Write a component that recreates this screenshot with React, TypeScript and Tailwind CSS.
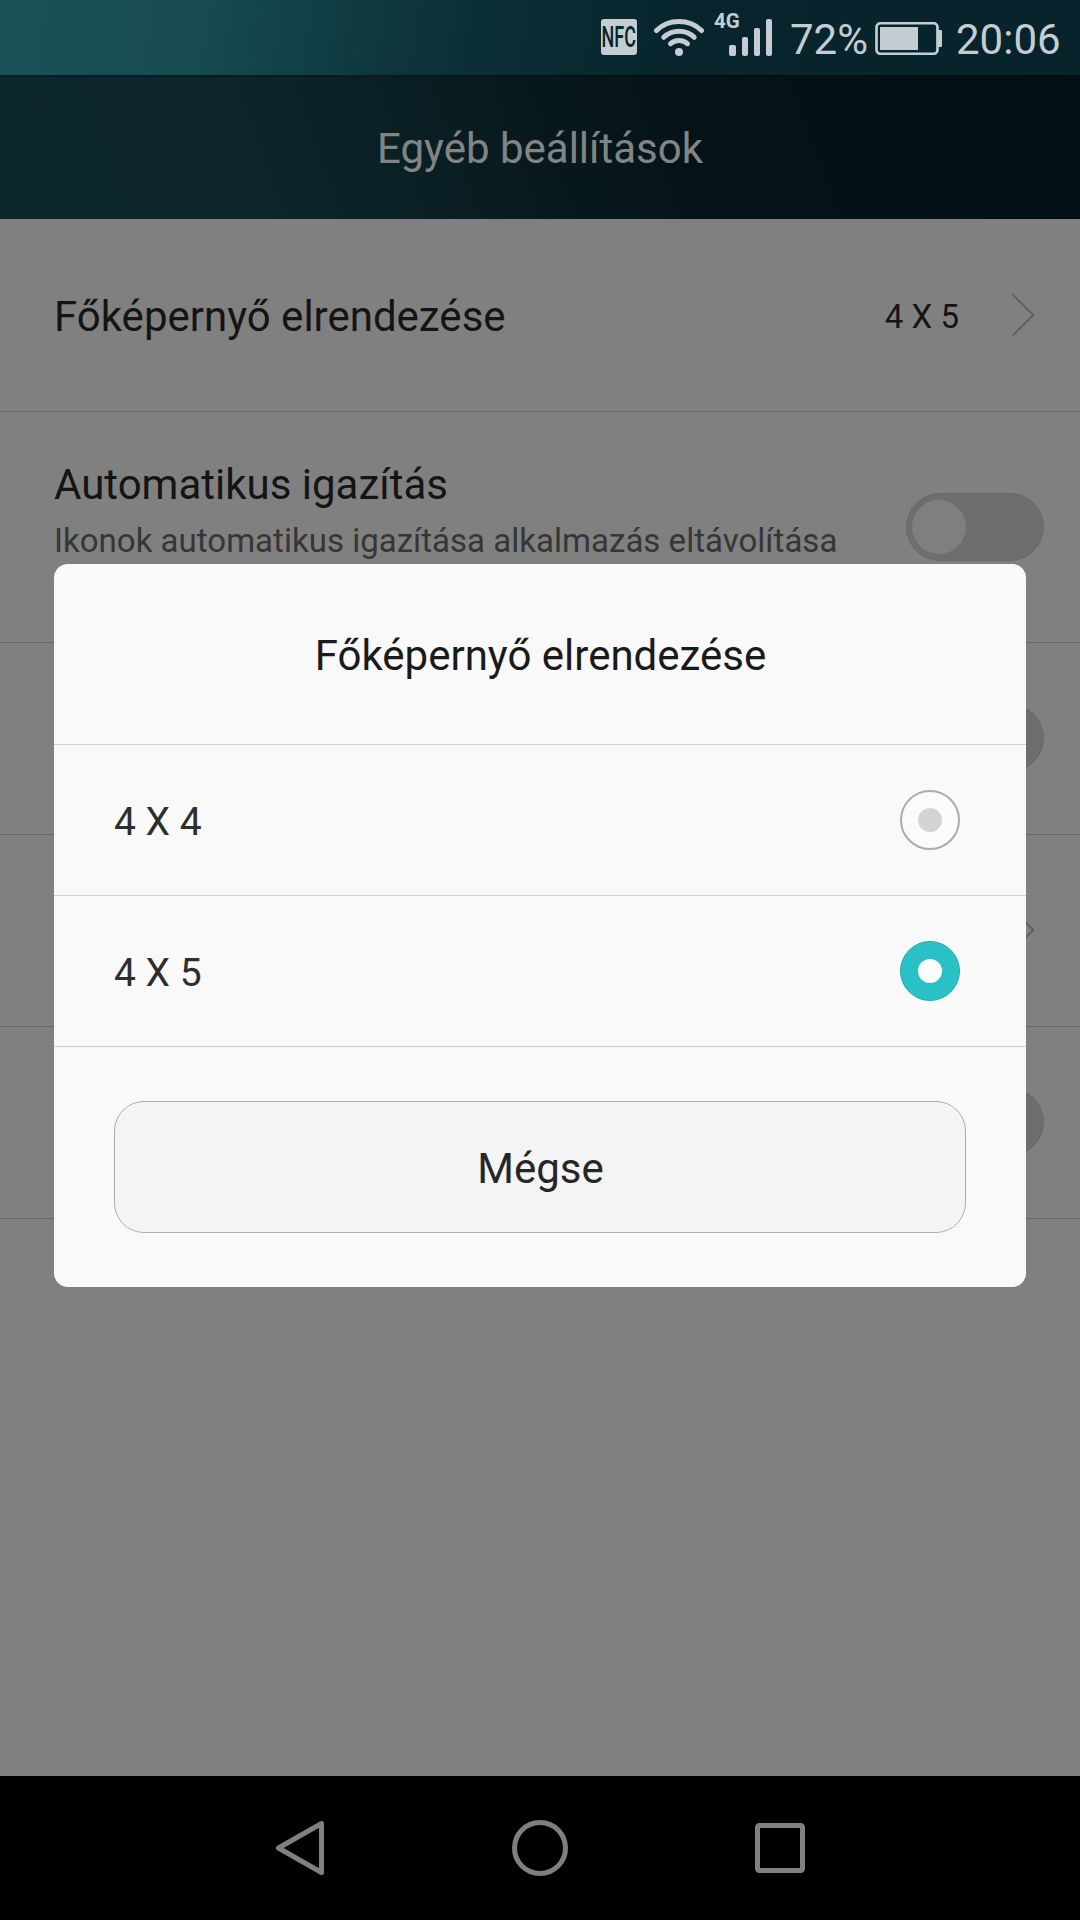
import React from "react";

function StatusBar() {
  return (
    <div className="flex h-[75px] shrink-0 items-start bg-[linear-gradient(100deg,#195259_0%,#184f55_10%,#164b50_19%,#113f45_29%,#0e373c_36%,#0b2d35_46%,#08252d_62%,#07232b_100%)] pl-[601px] text-[#c4cdd1]">
      <div className="mt-[19px] flex h-9 w-9 items-center justify-center rounded-[3px] bg-[#c4cdd1] text-[#08252d]">
        <span className="scale-x-[0.6] text-[30px] leading-none font-medium">NFC</span>
      </div>
      <svg className="mt-[18px] ml-[16px] h-[39px] w-[52px]" viewBox="0 0 52 39" fill="none" stroke="#c4cdd1" strokeWidth="5" strokeLinecap="round">
        <path d="M3.500 12.600C15.500 .6 36.500 .6 48.500 12.600" />
        <path d="M10.800 19.300C19 11.200 33 11.200 41.200 19.300" />
        <path d="M17.500 25.700C22 21.300 30 21.300 34.500 25.700" />
        <circle cx="26" cy="34" r="4" fill="#c4cdd1" stroke="none" />
      </svg>
      <div className="relative ml-[9px] h-[56px] w-[58px]">
        <span className="absolute top-[11px] left-0 origin-left scale-x-[0.98] text-[21px] leading-[20px] font-bold">4G</span>
        <svg className="absolute top-[19px] left-[14px] h-[37px] w-[45px]" viewBox="0 0 45 37" fill="#c4cdd1">
          <rect x="1" y="26" width="7" height="11" rx="2" />
          <rect x="14" y="18" width="6" height="19" rx="2" />
          <rect x="26" y="9" width="6" height="28" rx="2" />
          <rect x="38" y="0" width="6" height="37" rx="2" />
        </svg>
      </div>
      <span className="mt-4 ml-[18px] w-[85px] text-[42px] leading-[48px] whitespace-nowrap">72%</span>
      <svg className="mt-[22px] h-[33px] w-[68px]" viewBox="0 0 68 33" fill="#c4cdd1">
        <rect x="1.500" y="1.250" width="61" height="30.500" rx="4" fill="none" stroke="#c4cdd1" strokeWidth="2.700" />
        <rect x="5" y="5" width="38" height="23" />
        <rect x="63" y="8" width="4" height="17" rx="1" />
      </svg>
      <span className="mt-4 ml-[13px] text-[42px] leading-[48px] whitespace-nowrap">20:06</span>
    </div>
  );
}

function Toggle() {
  return (
    <div className="flex h-[68px] w-[138px] shrink-0 items-center rounded-full border border-[#696969] bg-[#6e6e6e] pl-[5px]">
      <div className="h-[54px] w-[54px] rounded-full bg-[#7f7f7f]" />
    </div>
  );
}

function Chevron() {
  return (
    <svg className="h-11 w-6 shrink-0" viewBox="0 0 24 44" fill="none" stroke="#5e5e5e" strokeWidth="1.800">
      <path d="M1.500 1.200L22.300 22L1.500 42.800" />
    </svg>
  );
}

function Radio({ checked }: { checked: boolean }) {
  return checked ? (
    <div className="flex h-[60px] w-[60px] items-center justify-center rounded-full border border-[#27abb1] bg-[#29c0c6]">
      <div className="h-6 w-6 rounded-full bg-white" />
    </div>
  ) : (
    <div className="flex h-[60px] w-[60px] items-center justify-center rounded-full border-2 border-[#acacac] bg-[#fbfbfb]">
      <div className="h-6 w-6 rounded-full bg-[#d4d4d4]" />
    </div>
  );
}

function LayoutDialog() {
  return (
    <div className="absolute top-[564px] left-[54px] flex h-[723px] w-[972px] flex-col rounded-[14px] bg-[#f9f9f9]">
      <h2 className="flex h-[181px] items-center justify-center border-b border-[#cfcfcf] pt-[2px] pl-px text-[42px] text-[#1a1a1a]">
        Főképernyő elrendezése
      </h2>
      {["4 X 4", "4 X 5"].map((label) => (
        <div key={label} className="flex h-[151px] items-center justify-between border-b border-[#cfcfcf] pr-[66px] pl-[60px] text-[39px] text-[#2e2e2e]">
          <span className="pt-[5px]">{label}</span>
          <Radio checked={label === "4 X 5"} />
        </div>
      ))}
      <button className="mt-[54px] ml-[60px] flex h-[132px] w-[852px] items-center justify-center rounded-[30px] border border-[#acacac] bg-[#f4f4f4] pt-[3px] pl-px text-[42px] text-[#262626]">
        Mégse
      </button>
    </div>
  );
}

function NavigationBar() {
  return (
    <div className="flex h-36 items-center justify-center gap-[180px] bg-black">
      <svg className="h-[60px] w-[60px]" viewBox="0 0 60 60" fill="none" stroke="#808080" strokeWidth="5" strokeLinejoin="round">
        <path d="M8.500 30L51.500 5.500V54.500Z" />
      </svg>
      <svg className="h-[60px] w-[60px]" viewBox="0 0 60 60" fill="none" stroke="#808080" strokeWidth="5">
        <circle cx="30" cy="30" r="25.500" />
      </svg>
      <svg className="h-[60px] w-[60px]" viewBox="0 0 60 60" fill="none" stroke="#808080" strokeWidth="5">
        <rect x="7.500" y="7.500" width="45" height="45" rx="2" />
      </svg>
    </div>
  );
}

export default function App() {
  return (
    <div className="relative flex h-[1920px] w-[1080px] flex-col overflow-hidden bg-[#808080] font-['Roboto',sans-serif]">
      <StatusBar />
      <header className="flex h-36 shrink-0 items-center justify-center border-t-2 border-[#020d10]/40 bg-[linear-gradient(70deg,#0d282d_0%,#0b252a_28%,#08191d_50%,#041317_64%,#031116_100%)] text-[42px] text-[#818585]">
        Egyéb beállítások
      </header>
      <main className="flex-1">
        <div className="flex h-[193px] items-center border-b border-[#686868] pr-[45px] pl-[54px] text-[#141414]">
          <span className="flex-1 pt-[2px] text-[42px]">Főképernyő elrendezése</span>
          <span className="mr-[52px] pt-1 text-[33px]">4 X 5</span>
          <Chevron />
        </div>
        <div className="flex h-[231px] items-center border-b border-[#686868] pr-9 pl-[54px]">
          <div className="w-[800px] shrink-0 pt-1">
            <p className="text-[42px] leading-[56px] text-[#141414]">Automatikus igazítás</p>
            <p className="h-[88px] text-[33px] leading-[56px] tracking-[0.02px] whitespace-nowrap text-[#363636]">Ikonok automatikus igazítása alkalmazás eltávolítása</p>
          </div>
          <div className="ml-auto"><Toggle /></div>
        </div>
        <div className="flex h-48 items-center justify-end border-b border-[#686868] pr-9 pb-px"><Toggle /></div>
        <div className="flex h-48 items-center justify-end border-b border-[#686868] pr-[45px] pb-px"><Chevron /></div>
        <div className="flex h-48 items-center justify-end border-b border-[#686868] pr-9 pb-px"><Toggle /></div>
      </main>
      <NavigationBar />
      <LayoutDialog />
    </div>
  );
}
